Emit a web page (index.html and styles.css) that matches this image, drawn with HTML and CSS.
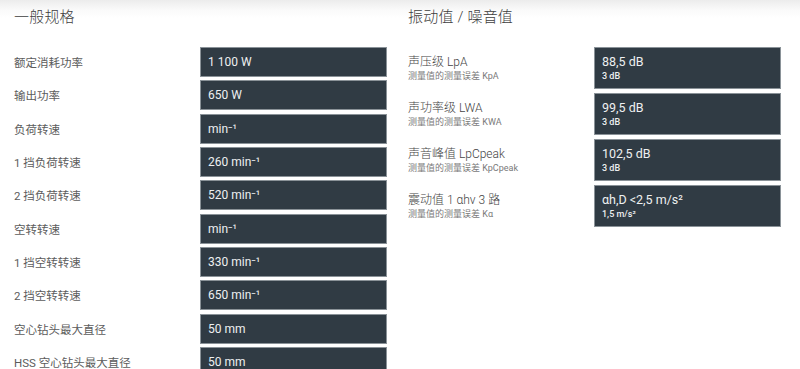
FILE: index.html
```html
<!DOCTYPE html>
<html lang="zh">
<head>
<meta charset="utf-8">
<link rel="stylesheet" href="styles.css">
</head>
<body>
<div class="page">
  <section class="col">
    <h2 class="title">一般规格</h2>
    <div class="rows">
      <div class="row"><div class="label">额定消耗功率</div><div class="val">1 100 W</div></div>
      <div class="row"><div class="label">输出功率</div><div class="val">650 W</div></div>
      <div class="row"><div class="label">负荷转速</div><div class="val">min⁻¹</div></div>
      <div class="row"><div class="label">1 挡负荷转速</div><div class="val">260 min⁻¹</div></div>
      <div class="row"><div class="label">2 挡负荷转速</div><div class="val">520 min⁻¹</div></div>
      <div class="row"><div class="label">空转转速</div><div class="val">min⁻¹</div></div>
      <div class="row"><div class="label">1 挡空转转速</div><div class="val">330 min⁻¹</div></div>
      <div class="row"><div class="label">2 挡空转转速</div><div class="val">650 min⁻¹</div></div>
      <div class="row"><div class="label">空心钻头最大直径</div><div class="val">50 mm</div></div>
      <div class="row"><div class="label">HSS 空心钻头最大直径</div><div class="val">50 mm</div></div>
    </div>
  </section>
  <section class="col">
    <h2 class="title">振动值 / 噪音值</h2>
    <div class="rows tall">
      <div class="row"><div class="label"><div class="main">声压级 LpA</div><div class="sub">测量值的测量误差 KpA</div></div><div class="val"><div class="main">88,5 dB</div><div class="sub">3 dB</div></div></div>
      <div class="row"><div class="label"><div class="main">声功率级 LWA</div><div class="sub">测量值的测量误差 KWA</div></div><div class="val"><div class="main">99,5 dB</div><div class="sub">3 dB</div></div></div>
      <div class="row"><div class="label"><div class="main">声音峰值 LpCpeak</div><div class="sub">测量值的测量误差 KpCpeak</div></div><div class="val"><div class="main">102,5 dB</div><div class="sub">3 dB</div></div></div>
      <div class="row"><div class="label"><div class="main">震动值 1 αhv 3 路</div><div class="sub">测量值的测量误差 Kα</div></div><div class="val"><div class="main">αh,D &lt;2,5 m/s²</div><div class="sub">1,5 m/s²</div></div></div>
    </div>
  </section>
</div>
</body>
</html>
```
FILE: styles.css
```css
html, body {
  margin: 0;
  padding: 0;
}
body {
  width: 800px;
  height: 369px;
  overflow: hidden;
  background: linear-gradient(to bottom, #ececec 0px, #fafafa 10px, #ffffff 18px);
  font-family: Roboto, "Noto Sans CJK SC", sans-serif;
  color: #555;
}
.page {
  display: grid;
  grid-template-columns: 373px 374px;
  column-gap: 21px;
  padding: 0 18px 0 14px;
}
.title {
  margin: 0;
  height: 47px;
  padding-top: 7px;
  box-sizing: border-box;
  font-size: 15px;
  font-weight: 300;
  color: #3e3e3e;
  line-height: 20px;
  letter-spacing: 0.2px;
}
.rows {
  display: flex;
  flex-direction: column;
  gap: 3.33px;
}
.rows.tall {
  gap: 4px;
}
.row {
  display: grid;
  grid-template-columns: 186px 187px;
  height: 30px;
}
.rows.tall .row {
  height: 42px;
}
.label {
  display: flex;
  flex-direction: column;
  justify-content: center;
  font-size: 11.5px;
  color: #5c5c5c;
}
.val {
  display: flex;
  flex-direction: column;
  justify-content: center;
  background: #303b44;
  border: 1px solid #8a9298;
  padding: 0 7px;
  color: #eef0f1;
  font-size: 12px;
}
.rows.tall .label {
  justify-content: flex-start;
  padding-top: 8px;
}
.rows.tall .label .main {
  font-size: 12px;
  line-height: 15px;
  font-weight: 300;
  color: #444;
}
.rows.tall .label .sub {
  font-size: 9px;
  line-height: 13px;
  color: #7a7a7a;
}
.rows.tall .val {
  justify-content: flex-start;
  padding-top: 6px;
}
.rows.tall .val .main {
  font-size: 12.5px;
  line-height: 16px;
}
.rows.tall .val .sub {
  font-size: 9px;
  line-height: 13px;
  font-weight: 500;
}
```
